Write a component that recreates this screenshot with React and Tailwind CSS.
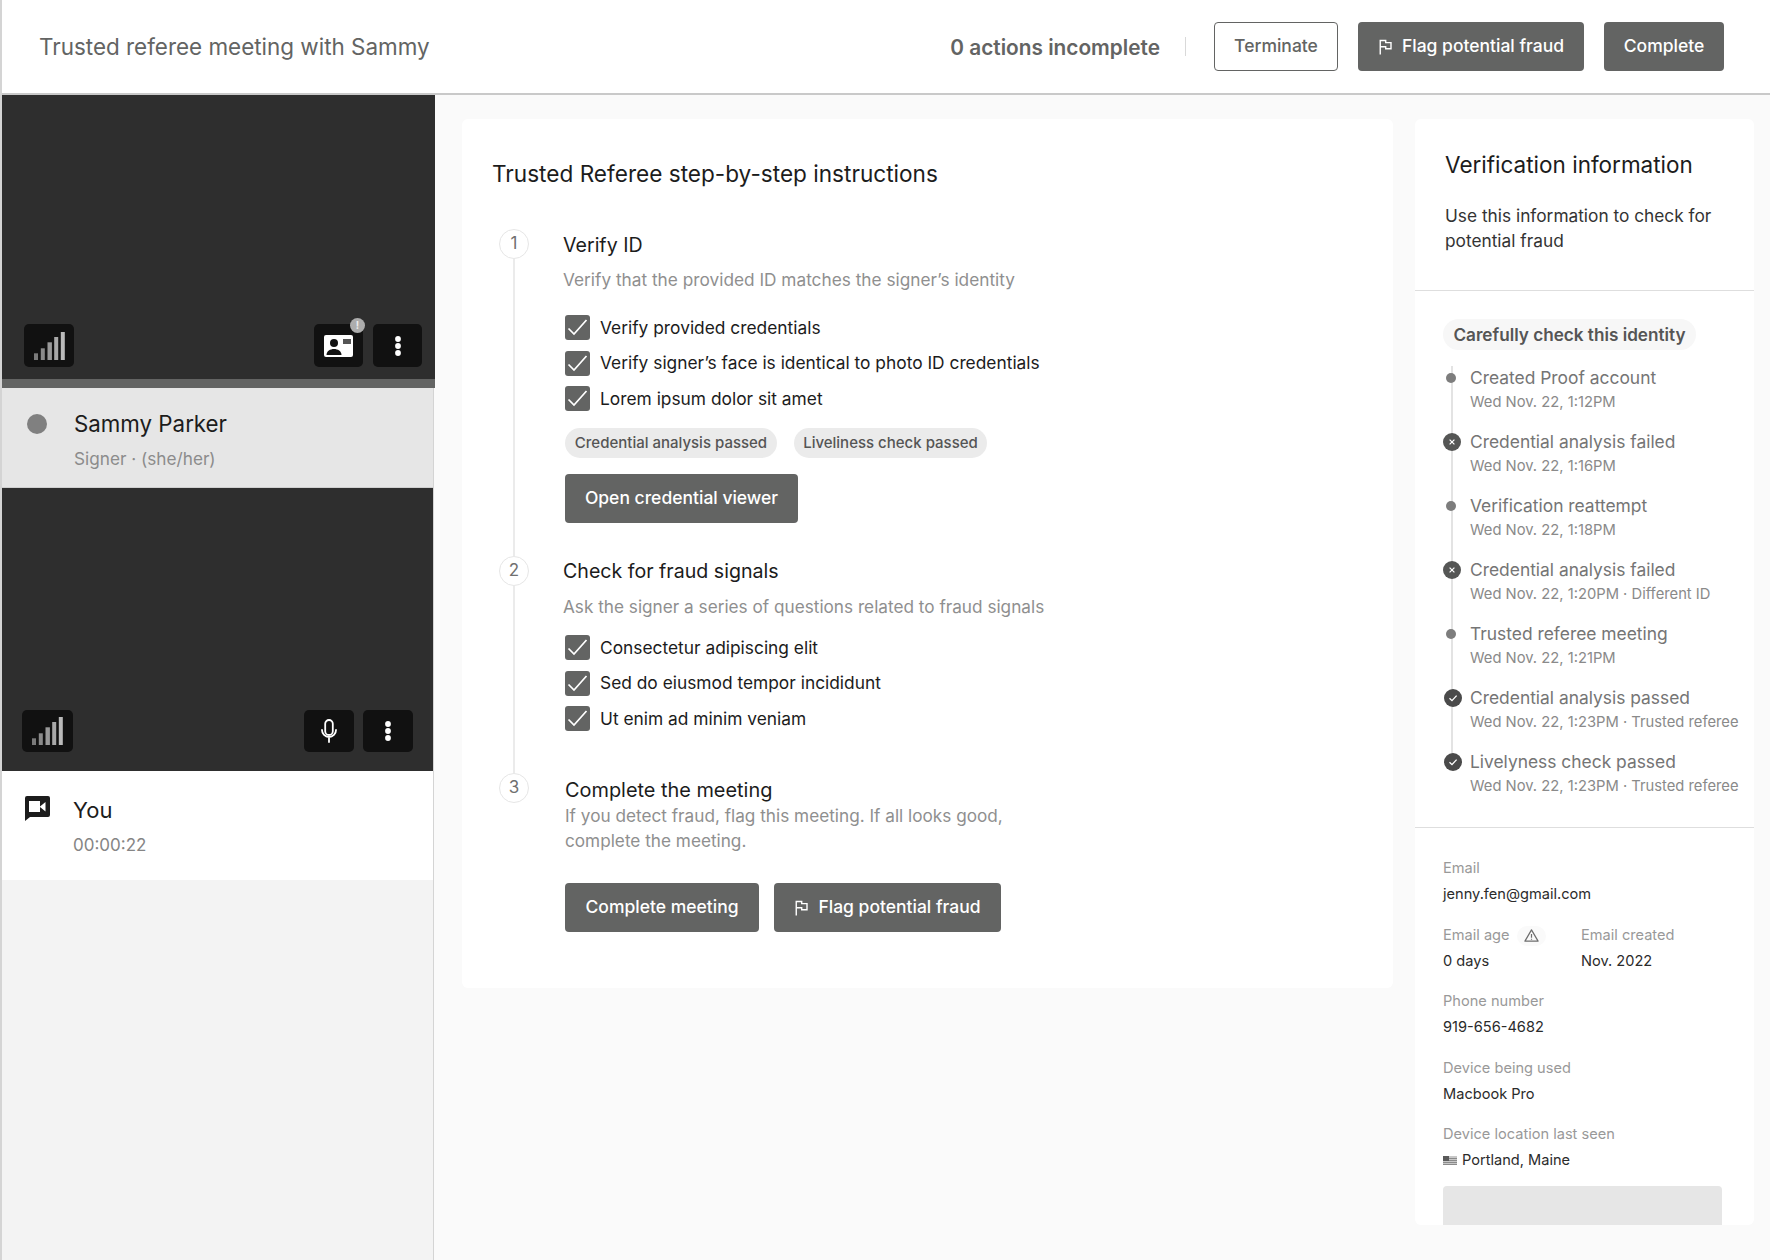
import React from "react";

const Flag = ({ className = "" }) => (
  <svg viewBox="0 0 14 16" width="15" height="16" className={className} fill="none" stroke="currentColor" strokeWidth="1.4">
    <path d="M1.75 15.5V1.5H7.2V3.6H12.5V9.8H7.2V7.7H1.75" />
  </svg>
);

const Check = () => (
  <svg viewBox="0 0 25 25" width="25" height="25" fill="none" stroke="#fff" strokeWidth="1.7" className="shrink-0 rounded-[3px] bg-[#636463]">
    <path d="M3.5 13.5L9 19L21.5 5" />
  </svg>
);

const Signal = () => (
  <svg viewBox="0 0 31 28" width="31" height="28">
    <rect x="0" y="21.3" width="4" height="6.7" fill="#7a7a7a" />
    <rect x="6.8" y="16.3" width="4" height="11.7" fill="#8a8a8a" />
    <rect x="13.5" y="10.3" width="4.4" height="17.7" fill="#999999" />
    <rect x="20.2" y="5" width="4" height="23" fill="#a8a8a8" />
    <rect x="26.8" y="0" width="4" height="28" fill="#bababa" />
  </svg>
);

const Dots = () => (
  <svg viewBox="0 0 8 22" width="8" height="22" fill="#fff">
    <circle cx="4" cy="4" r="2.9" />
    <circle cx="4" cy="11" r="2.9" />
    <circle cx="4" cy="18" r="2.9" />
  </svg>
);

const Chip = ({ children, className = "" }) => (
  <div className={`flex items-center justify-center rounded-[5px] bg-[#111111] ${className}`}>{children}</div>
);

const Btn = ({ children, className = "" }) => (
  <button className={`flex h-[49px] items-center justify-center gap-[9px] rounded-[4px] bg-[#636463] text-[17.5px] font-medium text-white ${className}`}>
    {children}
  </button>
);

const CheckRow = ({ children }) => (
  <div className="flex h-[25px] items-center gap-[10px] text-[17.35px] text-[#1c1c1c]">
    <Check />
    <span>{children}</span>
  </div>
);

const StepNum = ({ n, line }) => (
  <div className="flex w-[30px] shrink-0 flex-col items-center">
    <div className="flex h-[30px] w-[30px] shrink-0 items-center justify-center rounded-full border border-[#e6e6e6] bg-white text-[17px] text-[#707070]">{n}</div>
    {line && <div className="w-[2px] flex-1 bg-[#ebebeb]" />}
  </div>
);

const TimelineDot = ({ kind }) => {
  if (kind === "dot") return <div className="relative -left-[1px] h-[10px] w-[10px] rounded-full bg-[#7d7d7d]" />;
  if (kind === "x")
    return (
      <svg viewBox="0 0 18 18" width="18" height="18" className="relative">
        <circle cx="9" cy="9" r="9" fill="#555655" />
        <path d="M6.6 6.6L11.4 11.4M11.4 6.6L6.6 11.4" stroke="#fff" strokeWidth="1.2" />
      </svg>
    );
  return (
    <svg viewBox="0 0 18 18" width="18" height="18" className="relative left-[1px]">
      <circle cx="9" cy="9" r="9" fill="#4a4a4a" />
      <path d="M5.5 9.2L8 11.6L12.6 6.6" stroke="#fff" strokeWidth="1.3" fill="none" />
    </svg>
  );
};

const events = [
  ["dot", "Created Proof account", "Wed Nov. 22, 1:12PM"],
  ["x", "Credential analysis failed", "Wed Nov. 22, 1:16PM"],
  ["dot", "Verification reattempt", "Wed Nov. 22, 1:18PM"],
  ["x", "Credential analysis failed", "Wed Nov. 22, 1:20PM · Different ID"],
  ["dot", "Trusted referee meeting", "Wed Nov. 22, 1:21PM"],
  ["check", "Credential analysis passed", "Wed Nov. 22, 1:23PM · Trusted referee"],
  ["check", "Livelyness check passed", "Wed Nov. 22, 1:23PM · Trusted referee"],
];

const Field = ({ label, value, extra }) => (
  <div>
    <div className="flex h-6 items-center text-[14.6px] text-[#999999]">
      {label}
      {extra}
    </div>
    <div className="mt-[2px] flex h-6 items-center text-[14.6px] text-[#2b2b2b]">{value}</div>
  </div>
);

export default function App() {
  return (
    <div className="flex h-[1260px] w-[1770px] flex-col overflow-hidden border-l-2 border-[#d4d4d4] bg-[#fafafa]" style={{ fontFamily: "Inter, 'Liberation Sans', sans-serif" }}>
      <header className="flex h-[95px] shrink-0 items-center border-b-2 border-[#c9c9c9] bg-white pl-[37px] pr-[46px]">
        <div className="mt-[1px] text-[22.45px] text-[#636463]">Trusted referee meeting with Sammy</div>
        <div className="ml-auto mt-[2px] text-[20.8px] font-semibold text-[#636463]">0 actions incomplete</div>
        <div className="ml-[25px] h-[19px] w-px bg-[#d9d9d9]" />
        <button className="ml-[28px] h-[49px] w-[124px] rounded-[4px] border border-[#636463] bg-white text-[17.5px] font-medium text-[#636463]">Terminate</button>
        <Btn className="ml-[20px] w-[226px]"><Flag /><span>Flag potential fraud</span></Btn>
        <Btn className="ml-[20px] w-[120px]">Complete</Btn>
      </header>

      <div className="flex min-h-0 flex-1">
        <aside className="flex w-[432px] shrink-0 flex-col border-r border-[#d4d4d4] bg-[#f3f3f3]">
          <div className="-mr-[2px] flex h-[284px] shrink-0 items-end justify-between bg-[#2e2e2e] pb-[12px] pl-[22px] pr-[13px]">
            <Chip className="h-[43px] w-[50px]"><Signal /></Chip>
            <div className="flex gap-[10px]">
              <Chip className="relative h-[43px] w-[49px]">
                <svg viewBox="0 0 29 22" width="29" height="22">
                  <rect width="29" height="22" rx="2" fill="#fff" />
                  <circle cx="10" cy="8" r="4" fill="#111" />
                  <path d="M2.5 20c0-4 3.8-6 7.5-6s7.5 2 7.5 6z" fill="#111" />
                  <rect x="19" y="4" width="8" height="5" fill="#555" />
                </svg>
                <div className="absolute -right-[2px] -top-[6px] flex h-[15px] w-[15px] items-center justify-center rounded-full bg-[#adadad] text-[10px] font-bold text-[#ececec]">!</div>
              </Chip>
              <Chip className="h-[43px] w-[49px]"><Dots /></Chip>
            </div>
          </div>
          <div className="-mr-[2px] h-[9px] shrink-0 bg-[#636463]" />
          <div className="flex h-[100px] shrink-0 gap-[27px] border-b border-[#cfcfcf] bg-[#e6e6e6] pl-[25px] pt-[25px]">
            <div className="mt-[1px] h-[20px] w-[20px] rounded-full bg-[#808080]" />
            <div>
              <div className="-mt-[3px] text-[22.3px] leading-[28px] text-[#1c1c1c]">Sammy Parker</div>
              <div className="mt-[9px] text-[17.2px] leading-[24px] text-[#8c8c8c]">Signer · (she/her)</div>
            </div>
          </div>
          <div className="flex h-[283px] shrink-0 items-end justify-between bg-[#2e2e2e] pb-[19px] pl-[20px] pr-[20px]">
            <Chip className="h-[42px] w-[51px]"><Signal /></Chip>
            <div className="flex gap-[9px]">
              <Chip className="h-[42px] w-[50px]">
                <svg viewBox="0 0 16 24" width="16" height="24" fill="none" stroke="#fff" strokeWidth="1.8" strokeLinecap="round">
                  <rect x="4.2" y="1" width="7.6" height="15" rx="3.8" />
                  <path d="M1 11a7 7 0 0 0 14 0M8 18v5" />
                </svg>
              </Chip>
              <Chip className="h-[42px] w-[50px]"><Dots /></Chip>
            </div>
          </div>
          <div className="flex h-[109px] shrink-0 gap-[23px] bg-white pl-[23px] pt-[25px]">
            <svg viewBox="0 0 25 25" width="25" height="25" className="shrink-0">
              <path d="M2 0H23a2 2 0 0 1 2 2V19a2 2 0 0 1-2 2H5L0 25V2a2 2 0 0 1 2-2z" fill="#1c1c1c" />
              <path d="M4 5H15V10.5L20.5 6V15.5L15 11V16H4z" fill="#fff" />
            </svg>
            <div>
              <div className="text-[22px] leading-[28px] text-[#1c1c1c]">You</div>
              <div className="mt-[9px] text-[17px] leading-[24px] text-[#858585]">00:00:22</div>
            </div>
          </div>
        </aside>

        <main className="flex items-start gap-[22px] pl-[28px] pt-[24px]">
          <section className="w-[931px] rounded-[6px] bg-white pl-[30px] pt-[39px]">
            <h2 className="text-[22.6px] font-normal leading-[32px] text-[#1c1c1c]">Trusted Referee step-by-step instructions</h2>
            <div className="mt-[39px] pl-[7px]">
              <div className="flex gap-[34px]">
                <StepNum n="1" line />
                <div className="pb-[33px] pt-[2px]">
                  <div className="text-[19.6px] leading-[28px] text-[#1c1c1c]">Verify ID</div>
                  <div className="mt-[9px] text-[17.26px] leading-[24px] text-[#8f8f8f]">Verify that the provided ID matches the signer’s identity</div>
                  <div className="ml-[2px] mt-[23px] flex flex-col gap-[10.5px]">
                    <CheckRow>Verify provided credentials</CheckRow>
                    <CheckRow>Verify signer’s face is identical to photo ID credentials</CheckRow>
                    <CheckRow>Lorem ipsum dolor sit amet</CheckRow>
                  </div>
                  <div className="ml-[2px] mt-[17px] flex gap-[17px]">
                    <div className="flex h-[30px] w-[212px] items-center justify-center rounded-full bg-[#ebebeb] text-[15px] font-medium text-[#555555]">Credential analysis passed</div>
                    <div className="flex h-[30px] w-[193px] items-center justify-center rounded-full bg-[#ebebeb] text-[15px] font-medium text-[#555555]">Liveliness check passed</div>
                  </div>
                  <Btn className="ml-[2px] mt-[16px] w-[233px]">Open credential viewer</Btn>
                </div>
              </div>
              <div className="flex gap-[34px]">
                <StepNum n="2" line />
                <div className="pb-[42px] pt-[1px]">
                  <div className="text-[19.6px] leading-[28px] text-[#1c1c1c]">Check for fraud signals</div>
                  <div className="mt-[10px] text-[17.2px] leading-[24px] text-[#8f8f8f]">Ask the signer a series of questions related to fraud signals</div>
                  <div className="ml-[2px] mt-[16px] flex flex-col gap-[10.5px]">
                    <CheckRow>Consectetur adipiscing elit</CheckRow>
                    <CheckRow>Sed do eiusmod tempor incididunt</CheckRow>
                    <CheckRow>Ut enim ad minim veniam</CheckRow>
                  </div>
                </div>
              </div>
              <div className="flex gap-[36px]">
                <StepNum n="3" />
                <div className="pb-[56px] pt-[3px]">
                  <div className="text-[19.9px] leading-[28px] text-[#1c1c1c]">Complete the meeting</div>
                  <div className="-mt-px w-[460px] text-[17.2px] leading-[25px] text-[#8f8f8f]">If you detect fraud, flag this meeting. If all looks good, complete the meeting.</div>
                  <div className="mt-[30px] flex gap-[15px]">
                    <Btn className="w-[194px]">Complete meeting</Btn>
                    <Btn className="w-[227px]"><Flag /><span>Flag potential fraud</span></Btn>
                  </div>
                </div>
              </div>
            </div>
          </section>

          <section className="h-[1106px] w-[339px] overflow-hidden rounded-[6px] bg-white">
            <div className="border-b border-[#dedede] pb-[37px] pl-[30px] pr-[20px] pt-[30px]">
              <h2 className="text-[22.5px] font-normal leading-[32px] text-[#1c1c1c]">Verification information</h2>
              <p className="mt-[22px] text-[17.3px] leading-[25px] text-[#333333]">Use this information to check for potential fraud</p>
            </div>
            <div className="border-b border-[#dedede] pb-[29px] pl-[28px] pt-[28px]">
              <div className="inline-flex h-[31px] w-[253px] items-center justify-center rounded-full bg-[#f7f7f7] text-[17.15px] font-semibold text-[#555555]">Carefully check this identity</div>
              <div className="relative mt-[16px]">
                <div className="absolute bottom-[40px] left-[8px] top-0 w-[2px] bg-[#e3e3e3]" />
                {events.map(([kind, title, sub], i) => (
                  <div key={i} className={`flex gap-[9px] ${i < events.length - 1 ? "pb-[16px]" : ""}`}>
                    <div className="flex h-6 w-[18px] shrink-0 items-center justify-center">
                      <TimelineDot kind={kind} />
                    </div>
                    <div>
                      <div className="text-[17.4px] leading-[24px] text-[#757575]">{title}</div>
                      <div className="text-[14.75px] leading-[24px] text-[#8a8a8a]">{sub}</div>
                    </div>
                  </div>
                ))}
              </div>
            </div>
            <div className="pl-[28px] pr-[32px] pt-[29px]">
              <div className="grid grid-cols-[138px_1fr] gap-y-[16.5px]">
                <div className="col-span-2"><Field label="Email" value="jenny.fen@gmail.com" /></div>
                <Field
                  label="Email age"
                  value="0 days"
                  extra={
                    <span className="ml-[7px] flex h-5 w-[29px] items-center justify-center rounded-full bg-[#fafafa]">
                      <svg viewBox="0 0 16 16" width="15" height="15" fill="none" stroke="#6e6e6e" strokeWidth="1.3">
                        <path d="M8 2L15 14H1z" strokeLinejoin="round" />
                        <path d="M8 6.5V10.5M8 11.5V12.5" />
                      </svg>
                    </span>
                  }
                />
                <Field label="Email created" value="Nov. 2022" />
                <div className="col-span-2"><Field label="Phone number" value="919-656-4682" /></div>
                <div className="col-span-2"><Field label="Device being used" value="Macbook Pro" /></div>
                <div className="col-span-2">
                  <Field
                    label="Device location last seen"
                    value={
                      <span className="flex items-center gap-[5px]">
                        <svg viewBox="0 0 14 9" width="14" height="9">
                          <rect width="14" height="9" fill="#c8c8c8" />
                          <rect width="14" height="1" y="2" fill="#8a8a8a" />
                          <rect width="14" height="1" y="4" fill="#8a8a8a" />
                          <rect width="14" height="1" y="6" fill="#8a8a8a" />
                          <rect width="14" height="1" y="8" fill="#8a8a8a" />
                          <rect width="6" height="5" fill="#5a5a5a" />
                        </svg>
                        Portland, Maine
                      </span>
                    }
                  />
                </div>
              </div>
              <div className="mt-[13px] h-[100px] rounded-[4px] bg-[#e6e6e6]" />
            </div>
          </section>
        </main>
      </div>
    </div>
  );
}
